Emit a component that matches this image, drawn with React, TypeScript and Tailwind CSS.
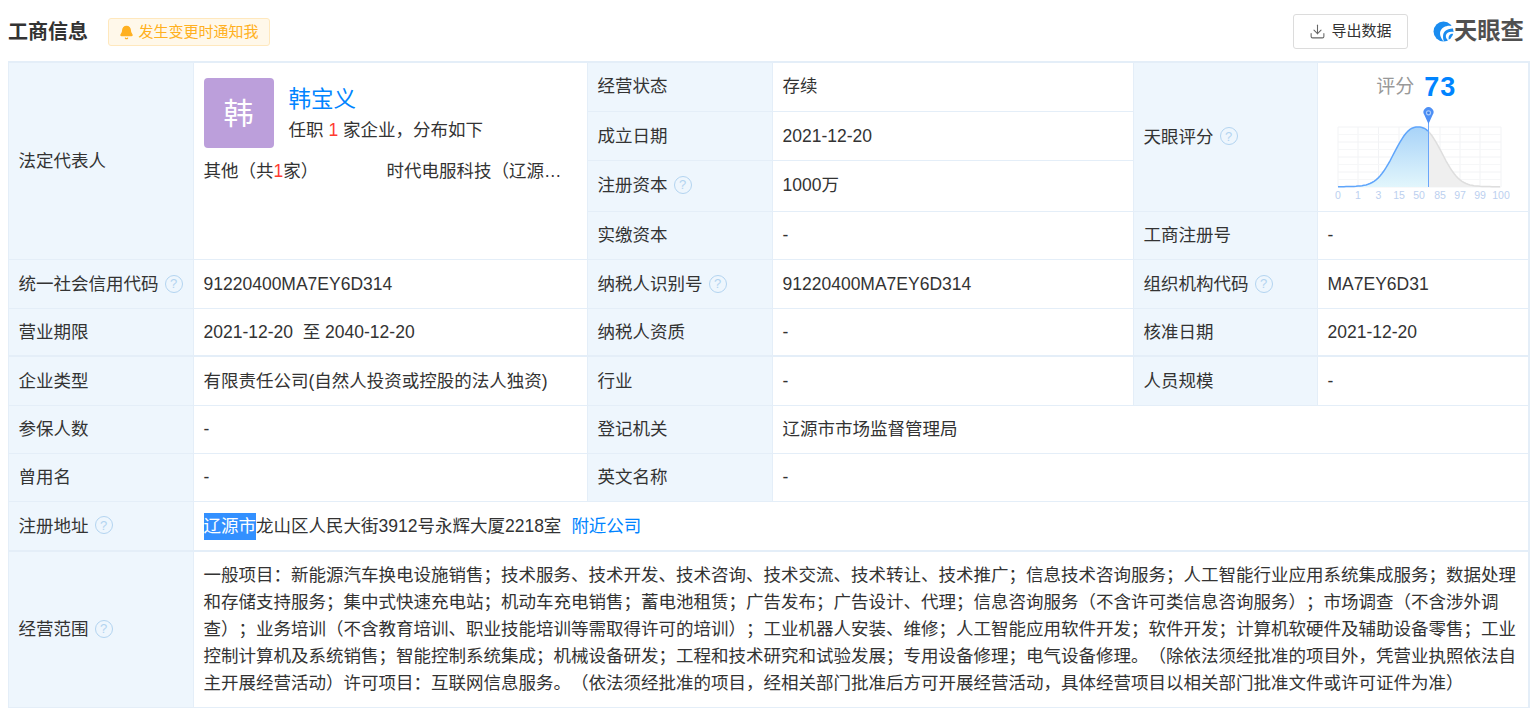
import { Bell, Download } from "lucide-react"
import type { ReactNode } from "react"

const font = "font-['Liberation_Sans','Noto_Sans_CJK_SC',sans-serif]"

// bell curve of the score chart, in page coordinates (viewBox below uses the same ones)
const curveY = (x: number) => {
    const d = Math.abs(x - 1418)
    return 187 - 58 * Math.exp(-((d / 29.9) ** 2.4)) - 2 * Math.exp(-((d / 55) ** 2))
}
const points = (from: number, to: number) => {
    const out: string[] = []
    for (let x = from; x <= to; x += 2) out.push(`${x} ${curveY(x).toFixed(1)}`)
    return out
}
const leftLine = "M" + points(1338, 1428).join(" L")
const rightLine = "M" + points(1428, 1500).join(" L")

function Help() {
    return (
        <span className="ml-[6px] inline-flex h-[18px] w-[18px] items-center justify-center rounded-full border-[1.5px] border-[#b3d4f0] align-[2px] text-[13px] leading-none text-[#b3d4f0]">
            ?
        </span>
    )
}

function Label({ children, help, className = "", ...rest }: { children: ReactNode, help?: boolean, rowSpan?: number, className?: string }) {
    return (
        <td {...rest} className={`border border-[#e4eef8] bg-[#eef6fd] pr-[10px] pl-[9.5px] align-middle ${className}`}>
            {children}
            {help && <Help />}
        </td>
    )
}

function Value({ children, className = "", ...rest }: { children: ReactNode, colSpan?: number, className?: string }) {
    return (
        <td {...rest} className={`border border-[#e4eef8] bg-white pr-[10px] pl-[9.5px] align-middle ${className}`}>
            {children}
        </td>
    )
}

function ScoreChart() {
    const xs = [1338, 1358, 1378.5, 1399, 1419, 1440, 1460, 1480, 1501]
    const labels = ["0", "1", "3", "15", "50", "85", "97", "99", "100"]
    const ys = [127, 142, 157, 172, 187]
    return (
        <svg viewBox="1335 105 175 97" className="h-[97px] w-[175px]">
            <defs>
                <linearGradient id="blueFill" x1="0" y1="0" x2="0" y2="1">
                    <stop offset="0" stopColor="#a8d3f8" />
                    <stop offset="1" stopColor="#e2f6fc" />
                </linearGradient>
            </defs>
            {xs.map((x) => <line key={x} x1={x} x2={x} y1={127} y2={187} stroke="#f2f3f5" />)}
            {ys.map((y) => <line key={y} x1={1338} x2={1501} y1={y} y2={y} stroke="#f2f3f5" />)}
            {[134.5, 149.5, 164.5, 179.5].map((y) => <line key={y} x1={1338} x2={1501} y1={y} y2={y} stroke="#f6f7f8" />)}
            <path d={`${rightLine} L1500 187 L1428 187 Z`} fill="#efefef" />
            <path d={`${leftLine} L1428 187 L1338 187 Z`} fill="url(#blueFill)" />
            <path d={rightLine} fill="none" stroke="#dedede" strokeWidth="1.5" />
            <path d={leftLine} fill="none" stroke="#5fa5fb" strokeWidth="1.5" />
            <line x1="1428.5" x2="1428.5" y1="118" y2="187" stroke="#6aa6fb" strokeWidth="1" />
            <path d="M1428.5 124 L1424.4 115 A5 5 0 1 1 1432.6 115 Z" fill="#4d8ff5" />
            <circle cx="1428.5" cy="112.8" r="2.6" fill="#a9cbfb" />
            <circle cx="1428.5" cy="112.8" r="1.4" fill="#3d7fe8" />
            {labels.map((t, i) => (
                <text key={t} x={xs[i]} y={199} textAnchor="middle" fontSize="10.5" fill="#bcd0ef" fontFamily="Liberation Sans, sans-serif">
                    {t}
                </text>
            ))}
        </svg>
    )
}

function Logo() {
    return (
        <div className="flex w-[91px] items-center">
            <svg viewBox="0 0 20 20" className="h-[21px] w-[21px] shrink-0">
                <circle cx="10" cy="10" r="9.5" fill="#1a8cf0" />
                <path d="M20 5.2 C14.5 3.2 8.6 5.2 7 9.8 C6 12.8 7.6 16.8 10.6 20 C9 15.8 9.2 11.8 11.6 9.6 C13.8 7.6 17 6.8 20 7.2 Z" fill="#fff" />
                <path d="M20 10.6 C16.2 9.6 12.6 11 12.2 14 C12 16 13.4 18 15.4 19 C14.6 17 14.6 14.8 15.8 13.4 C16.8 12.3 18.4 12 20 12.4 Z" fill="#fff" />
            </svg>
            <span className="text-[23.3px] leading-none font-semibold whitespace-nowrap text-[#505050]">天眼查</span>
        </div>
    )
}

export default function App() {
    return (
        <div className={`${font} bg-white text-[17.5px] text-[#333] [text-spacing-trim:space-all]`}>
            <div className="flex h-[61px] items-center justify-between pt-[2px] pr-[11px] pl-[8px]">
                <div className="flex items-center">
                    <h2 className="text-[20px] font-bold text-[#333]">工商信息</h2>
                    <span className="mt-[1px] ml-[20px] flex h-[28px] w-[162px] items-center justify-center rounded-[3px] border border-[#ffe8bd] bg-[#fff8ea] text-[15px] text-[#ffb020]">
                        <Bell size={15} fill="currentColor" className="mr-[4px]" />
                        发生变更时通知我
                    </span>
                </div>
                <div className="flex items-center">
                    <button className="flex h-[35px] w-[115px] items-center justify-center rounded-[3px] border border-[#dcdcdc] text-[15px] text-[#333]">
                        <Download size={17} strokeWidth={1.5} className="mr-[5px] text-[#666]" />
                        导出数据
                    </button>
                    <div className="ml-[25px]">
                        <Logo />
                    </div>
                </div>
            </div>

            <table className="ml-[8px] w-[1520px] table-fixed border-collapse border-t-2 border-r-2 border-[#e4eef8]">
                <colgroup>
                    <col className="w-[185px]" />
                    <col className="w-[394px]" />
                    <col className="w-[185px]" />
                    <col className="w-[361px]" />
                    <col className="w-[184px]" />
                    <col className="w-[211px]" />
                </colgroup>
                <tbody>
                    <tr className="h-[49px]">
                        <Label rowSpan={4}>法定代表人</Label>
                        <td rowSpan={4} className="border border-[#e4eef8] pr-[10px] pl-[9.5px] pt-[15px] align-top">
                            <div className="flex items-center">
                                <div className="flex h-[70px] w-[70px] items-center justify-center rounded-[4px] bg-[#bc9fdb] text-[30px] text-white">韩</div>
                                <div className="mt-[2px] ml-[15px]">
                                    <div className="text-[22.5px] leading-[32px] text-[#0084ff]">韩宝义</div>
                                    <div className="leading-[28px]">任职 <span className="text-[#ff3b30]">1</span> 家企业，分布如下</div>
                                </div>
                            </div>
                            <div className="mt-[10px] flex leading-[26px]">
                                <div className="w-[183px]">其他（共<span className="text-[#ff3b30]">1</span>家）</div>
                                <div className="whitespace-nowrap">时代电服科技（辽源…</div>
                            </div>
                        </td>
                        <Label className="pb-[2px]">经营状态</Label>
                        <Value className="pb-[2px]">存续</Value>
                        <Label rowSpan={3} help>天眼评分</Label>
                        <td rowSpan={3} className="border border-[#e4eef8] align-top">
                            <div className="flex h-[36px] items-center justify-center pt-[12px] pr-[13px] text-[19px] text-[#999]">
                                评分
                                <span className="ml-[10px] text-[27px] font-bold tracking-[1px] text-[#0084ff]">73</span>
                            </div>
                            <div className="mt-[6px] flex justify-center">
                                <ScoreChart />
                            </div>
                        </td>
                    </tr>
                    <tr className="h-[49px]">
                        <Label className="pt-[2px]">成立日期</Label>
                        <Value className="pt-[2px]">2021-12-20</Value>
                    </tr>
                    <tr className="h-[51px]">
                        <Label help>注册资本</Label>
                        <Value>1000万</Value>
                    </tr>
                    <tr className="h-[48px]">
                        <Label>实缴资本</Label>
                        <Value>-</Value>
                        <Label>工商注册号</Label>
                        <Value>-</Value>
                    </tr>
                    <tr className="h-[49px] [&>td]:pt-[2px]">
                        <Label help>统一社会信用代码</Label>
                        <Value>91220400MA7EY6D314</Value>
                        <Label help>纳税人识别号</Label>
                        <Value>91220400MA7EY6D314</Value>
                        <Label help>组织机构代码</Label>
                        <Value>MA7EY6D31</Value>
                    </tr>
                    <tr className="h-[48px] [&>td]:border-b-2">
                        <Label>营业期限</Label>
                        <Value>2021-12-20&nbsp; 至 2040-12-20</Value>
                        <Label>纳税人资质</Label>
                        <Value>-</Value>
                        <Label>核准日期</Label>
                        <Value>2021-12-20</Value>
                    </tr>
                    <tr className="h-[49px]">
                        <Label>企业类型</Label>
                        <Value>有限责任公司(自然人投资或控股的法人独资)</Value>
                        <Label>行业</Label>
                        <Value>-</Value>
                        <Label>人员规模</Label>
                        <Value>-</Value>
                    </tr>
                    <tr className="h-[48px]">
                        <Label>参保人数</Label>
                        <Value>-</Value>
                        <Label>登记机关</Label>
                        <Value colSpan={3}>辽源市市场监督管理局</Value>
                    </tr>
                    <tr className="h-[48px]">
                        <Label>曾用名</Label>
                        <Value>-</Value>
                        <Label>英文名称</Label>
                        <Value colSpan={3}>-</Value>
                    </tr>
                    <tr className="h-[50px] [&>td]:border-b-2">
                        <Label help>注册地址</Label>
                        <Value colSpan={5} className="pt-[2px]">
                            <span className="inline-block bg-[#3390ff] leading-[27px] text-white">辽源市</span>龙山区人民大街3912号永辉大厦2218室
                            <span className="ml-[10px] text-[#0084ff]">附近公司</span>
                        </Value>
                    </tr>
                    <tr className="h-[156px]">
                        <Label help>经营范围</Label>
                        <Value colSpan={5}>
                            <div className="leading-[27px]">
                                一般项目：新能源汽车换电设施销售；技术服务、技术开发、技术咨询、技术交流、技术转让、技术推广；信息技术咨询服务；人工智能行业应用系统集成服务；数据处理和存储支持服务；集中式快速充电站；机动车充电销售；蓄电池租赁；广告发布；广告设计、代理；信息咨询服务（不含许可类信息咨询服务）；市场调查（不含涉外调查）；业务培训（不含教育培训、职业技能培训等需取得许可的培训）；工业机器人安装、维修；人工智能应用软件开发；软件开发；计算机软硬件及辅助设备零售；工业控制计算机及系统销售；智能控制系统集成；机械设备研发；工程和技术研究和试验发展；专用设备修理；电气设备修理。（除依法须经批准的项目外，凭营业执照依法自主开展经营活动）许可项目：互联网信息服务。（依法须经批准的项目，经相关部门批准后方可开展经营活动，具体经营项目以相关部门批准文件或许可证件为准）
                            </div>
                        </Value>
                    </tr>
                </tbody>
            </table>
        </div>
    )
}
